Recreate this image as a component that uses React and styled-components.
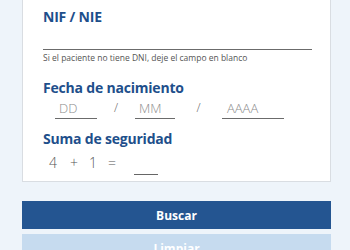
import React from 'react';
import styled, { createGlobalStyle } from 'styled-components';

const Global = createGlobalStyle`
  html, body {
    margin: 0;
    padding: 0;
    background: #eef4fa;
    font-family: "Open Sans", "Liberation Sans", sans-serif;
    overflow: hidden;
  }
`;

const Page = styled.div`
  width: 350px;
  height: 250px;
  padding: 0 19px 0 22px;
  box-sizing: border-box;
  overflow: hidden;
`;

const Card = styled.div`
  background: #fff;
  border: 1px solid #d9dde2;
  border-top: none;
  padding: 7px 18px 0 20px;
  height: 182px;
  box-sizing: border-box;
`;

const Title = styled.div`
  font-weight: 700;
  font-size: 14px;
  color: #1e4f8b;
  letter-spacing: -0.2px;
  line-height: 20px;
  margin-top: ${p => p.top || 0}px;
`;

const Line = styled.div`
  border-bottom: 1px solid #6b6b6b;
  height: 0;
  margin-top: ${p => p.top || 0}px;
`;

const Hint = styled.div`
  font-size: 8.5px;
  color: #555;
  margin-top: 2px;
  line-height: 11px;
`;

const Row = styled.div`
  display: flex;
  align-items: flex-end;
  margin-top: ${p => p.top || 0}px;
  padding-left: ${p => p.left || 0}px;
`;

const Field = styled.div`
  width: ${p => p.w}px;
  border-bottom: 1px solid #6b6b6b;
  color: #8c8c8c;
  font-size: 13px;
  font-weight: 300;
  line-height: 14px;
  padding-left: ${p => p.pl || 4}px;
  padding-top: 1px;
  box-sizing: border-box;
  height: 19px;
`;

const Slash = styled.div`
  width: ${p => p.w}px;
  text-align: center;
  color: #666;
  font-size: 12px;
  font-weight: 300;
  line-height: 14px;
  padding-bottom: 4px;
`;

const Sym = styled.span`
  color: #555;
  font-size: 14px;
  font-weight: 300;
  width: ${p => p.w}px;
  line-height: 20px;
  display: inline-block;
`;

const Answer = styled.div`
  width: 24px;
  border-bottom: 1.5px solid #666;
  height: 0;
  margin-bottom: -2px;
`;

const Button = styled.div`
  height: 28px;
  background: ${p => (p.light ? '#c6dbef' : '#245591')};
  color: #fff;
  font-weight: 700;
  font-size: 12px;
  display: flex;
  align-items: center;
  justify-content: center;
  margin-top: ${p => p.top}px;
`;

export default function App() {
  return (
    <>
      <Global />
      <Page>
        <Card>
          <Title>NIF / NIE</Title>
          <Line top={22} />
          <Hint>Si el paciente no tiene DNI, deje el campo en blanco</Hint>
          <Title top={15}>Fecha de nacimiento</Title>
          <Row top={2} left={12}>
            <Field w={42}>DD</Field>
            <Slash w={38}>/</Slash>
            <Field w={40}>MM</Field>
            <Slash w={47}>/</Slash>
            <Field w={62} pl={5}>AAAA</Field>
          </Row>
          <Title top={10}>Suma de seguridad</Title>
          <Row top={4} left={6}>
            <Sym w={21}>4</Sym>
            <Sym w={19}>+</Sym>
            <Sym w={19}>1</Sym>
            <Sym w={26}>=</Sym>
            <Answer />
          </Row>
        </Card>
        <Button top={19}>Buscar</Button>
        <Button light top={5}>Limpiar</Button>
      </Page>
    </>
  );
}
